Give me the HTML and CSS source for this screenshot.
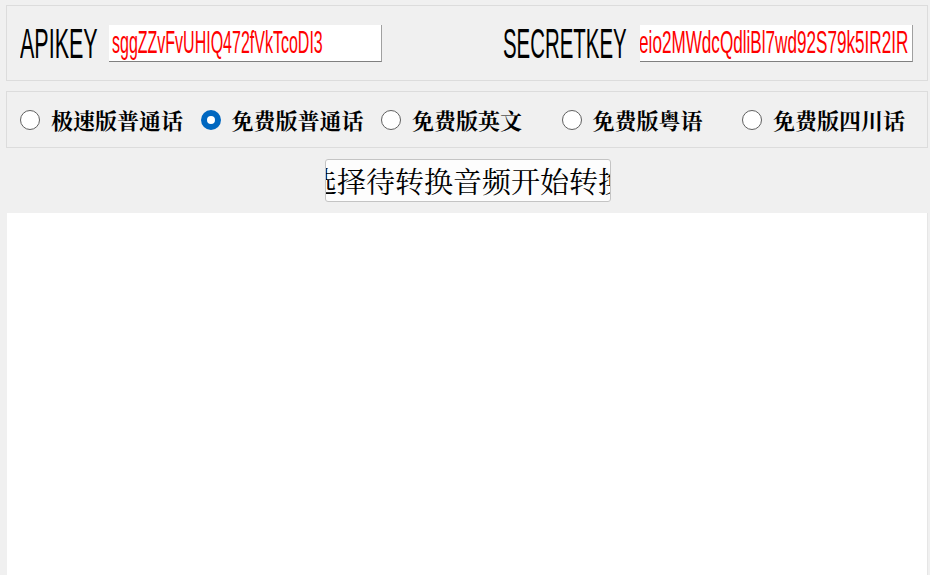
FILE: index.html
```html
<!DOCTYPE html>
<html lang="zh-CN">
  <head>
    <meta charset="UTF-8" />
    <meta name="viewport" content="width=device-width, initial-scale=1.0" />
    <title>语音转文字</title>
    <link rel="stylesheet" href="styles.css">
  </head>
  <body>
    <div class="window">
      <div class="panel key-panel">
        <div class="key-group">
          <div class="key-label api-label"><span>APIKEY</span></div>
          <div class="key-field"><span>sggZZvFvUHIQ472fVkTcoDI3</span></div>
        </div>
        <div class="key-group">
          <div class="key-label secret-label"><span>SECRETKEY</span></div>
          <div class="key-field key-field-end"><span>eio2MWdcQdliBl7wd92S79k5IR2IR</span></div>
        </div>
      </div>

      <div class="panel mode-panel">
        <label class="mode"><span class="radio"></span>极速版普通话</label>
        <label class="mode"><span class="radio checked"></span>免费版普通话</label>
        <label class="mode"><span class="radio"></span>免费版英文</label>
        <label class="mode"><span class="radio"></span>免费版粤语</label>
        <label class="mode"><span class="radio"></span>免费版四川话</label>
      </div>

      <div class="actions">
        <button class="start-btn"><span>选择待转换音频开始转换</span></button>
      </div>

      <div class="result"></div>
    </div>
  </body>
</html>
```

FILE: styles.css
```css
body {
  margin: 0;
  padding: 0;
  background-color: #f0f0f0;
  font-family: "Liberation Sans", Arial, sans-serif;
  overflow: hidden;
}
.window {
  height: 575px;
  display: flex;
  flex-direction: column;
}
.panel {
  margin: 0 2px 0 6px;
  border: 1px solid #dcdcdc;
  box-sizing: border-box;
}
.key-panel {
  margin-top: 5px;
  height: 76px;
  display: flex;
  align-items: center;
  justify-content: space-between;
  padding: 0 14px 0 13px;
}
.key-group {
  display: flex;
  align-items: center;
}
.key-label {
  height: 44px;
  overflow: visible;
  white-space: nowrap;
  color: #000;
  font-size: 43px;
  line-height: 44px;
}
.key-label span {
  display: inline-block;
  transform: scaleX(0.5);
  transform-origin: left center;
}
.api-label {
  width: 89px;
}
.secret-label {
  width: 137px;
}
.secret-label span {
  transform: scaleX(0.475);
}
.key-field {
  width: 273px;
  height: 37px;
  box-sizing: border-box;
  background-color: #fff;
  border-right: 1px solid #a0a0a0;
  border-bottom: 1px solid #808080;
  overflow: hidden;
  white-space: nowrap;
  display: flex;
  align-items: center;
  color: #f00;
  font-size: 32px;
  padding-left: 3px;
}
.key-field span {
  display: inline-block;
  transform: scaleX(0.5);
  transform-origin: left center;
}
.key-field-end {
  justify-content: flex-end;
  padding: 0 4px 0 0;
}
.key-field-end span {
  flex-shrink: 0;
  transform: scaleX(0.535);
  transform-origin: right center;
}
.mode-panel {
  margin-top: 10px;
  height: 57px;
  display: grid;
  grid-template-columns: repeat(5, 180.5px);
  align-items: center;
  padding-left: 13px;
}
.mode {
  display: flex;
  align-items: center;
  gap: 11px;
  font-family: "Noto Serif CJK SC", "Noto Sans CJK SC", serif;
  font-weight: bold;
  font-size: 22px;
  color: #000;
  white-space: nowrap;
}
.radio {
  width: 20px;
  height: 20px;
  box-sizing: border-box;
  border: 1px solid #5f5f5f;
  border-radius: 50%;
  background-color: #fff;
  flex-shrink: 0;
}
.radio.checked {
  border: 6px solid #0067c0;
  background-color: #fff;
}
.actions {
  margin-top: 11px;
  display: flex;
  justify-content: center;
  padding-left: 5px;
}
.start-btn {
  width: 286px;
  height: 43px;
  padding: 0;
  background-color: #fdfdfd;
  border: 1px solid #c4c4c4;
  border-radius: 3px;
  overflow: hidden;
  display: flex;
  justify-content: center;
  align-items: center;
  font-family: "Noto Serif CJK SC", "Noto Sans CJK SC", serif;
  font-size: 29px;
  color: #000;
}
.start-btn span {
  flex-shrink: 0;
  white-space: nowrap;
}
.result {
  margin: 11px 2px 0 7px;
  flex: 1;
  background-color: #fff;
  border-right: 1px solid #e6e6e6;
}
```
